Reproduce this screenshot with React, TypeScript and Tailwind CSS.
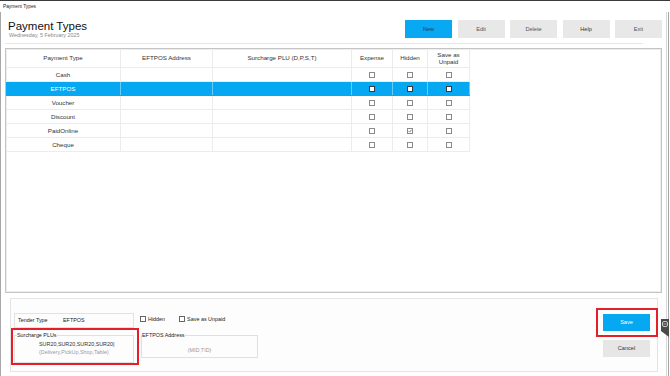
import React from "react";

const rows = [
  { name: "Cash", expense: false, hidden: false, unpaid: false },
  { name: "EFTPOS", expense: false, hidden: false, unpaid: false, selected: true },
  { name: "Voucher", expense: false, hidden: false, unpaid: false },
  { name: "Discount", expense: false, hidden: false, unpaid: false },
  { name: "PaidOnline", expense: false, hidden: true, unpaid: false },
  { name: "Cheque", expense: false, hidden: false, unpaid: false },
];

function Check({ checked, sel }: { checked?: boolean; sel?: boolean }) {
  return (
    <div
      className={
        "w-[6px] h-[6px] border flex items-center justify-center " +
        (sel ? "border-[#3a3a3a] bg-white" : "border-[#8a8a8a] bg-white")
      }
    >
      {checked && (
        <svg width="4" height="4" viewBox="0 0 4 4">
          <path d="M0.5 2 L1.6 3.1 L3.5 0.8" stroke="#555" strokeWidth="0.7" fill="none" />
        </svg>
      )}
    </div>
  );
}

const cols = ["w-[115px]", "w-[92px]", "w-[139px]", "w-[41px]", "w-[35px]", "w-[42px]"];

export default function App() {
  return (
    <div
      className="relative w-[670px] h-[376px] overflow-hidden bg-white border-t border-[#3a3a3a] text-[#333]"
      style={{ fontFamily: '"Liberation Sans", Arial, sans-serif' }}
    >
      {/* window side borders */}
      <div className="absolute left-0 top-[11px] bottom-0 w-[1px] bg-[#a8a8a8]" />
      <div className="absolute right-[1px] top-[11px] bottom-0 w-[1px] bg-[#a8a8a8]" />
      <div className="absolute right-[3px] top-[11px] bottom-0 w-[1px] bg-[#d8d8d8]" />

      {/* title bar */}
      <div className="h-[11px] flex items-center pl-[3px] text-[4.8px] leading-[6px] text-[#222]">
        Payment Types
      </div>

      {/* header */}
      <div className="ml-[5px] w-[657px] flex justify-between pt-[8px]">
        <div className="pl-[3px]">
          <div className="text-[11.5px] leading-[12px] text-[#111]">Payment Types</div>
          <div className="mt-[0px] pl-[1px] text-[5.4px] leading-[6px] text-[#8a8a8a]">
            Wednesday, 5 February 2025
          </div>
        </div>
        <div className="flex gap-[5.5px] pr-[0px]">
          <button className="w-[47px] h-[18px] bg-[#08a9f2] text-[5.6px] text-[#23405a]">New</button>
          <button className="w-[47px] h-[18px] bg-[#e8e8e8] text-[5.6px] text-[#555]">Edit</button>
          <button className="w-[47px] h-[18px] bg-[#e8e8e8] text-[5.6px] text-[#555]">Delete</button>
          <button className="w-[47px] h-[18px] bg-[#e8e8e8] text-[5.6px] text-[#333]">Help</button>
          <button className="w-[47px] h-[18px] bg-[#e8e8e8] text-[5.6px] text-[#555]">Exit</button>
        </div>
      </div>
      <div className="ml-[5px] w-[638px] h-[6px] border-b border-[#e6e6e6]" />

      {/* table panel */}
      <div className="ml-[5px] mt-[4px] w-[657px] h-[245px] border border-[#c4c4c4] shadow-[inset_0_0_0_1px_#ededed] pt-[1px] pl-[0px]">
        <div className="w-[464px]">
          <div className="flex h-[18px] text-[6.2px] text-[#333] border-b border-[#ececec]">
            {["Payment Type", "EFTPOS Address", "Surcharge PLU (D,P,S,T)", "Expense", "Hidden", "Save as Unpaid"].map(
              (h, i) => (
                <div
                  key={h}
                  className={
                    cols[i] +
                    " flex items-center justify-center text-center leading-[6.8px] border-r border-[#ececec]" +
                    (i === 5 ? " px-[6px]" : "")
                  }
                >
                  {h}
                </div>
              )
            )}
          </div>
          {rows.map((r) => (
            <div
              key={r.name}
              className={
                "flex h-[14px] text-[6.2px] border-b " +
                (r.selected ? "bg-[#06a8f1] text-white border-[#06a8f1]" : "text-[#333] border-[#ececec]")
              }
            >
              <div className={cols[0] + " flex items-center justify-center border-r " + (r.selected ? "border-white/40" : "border-[#ececec]")}>
                {r.name}
              </div>
              <div className={cols[1] + " border-r " + (r.selected ? "border-white/40" : "border-[#ececec]")} />
              <div className={cols[2] + " border-r " + (r.selected ? "border-white/40" : "border-[#ececec]")} />
              <div className={cols[3] + " flex items-center justify-center border-r " + (r.selected ? "border-white/40" : "border-[#ececec]")}>
                <Check checked={r.expense} sel={r.selected} />
              </div>
              <div className={cols[4] + " flex items-center justify-center border-r " + (r.selected ? "border-white/40" : "border-[#ececec]")}>
                <Check checked={r.hidden} sel={r.selected} />
              </div>
              <div className={cols[5] + " flex items-center justify-center border-r " + (r.selected ? "border-white/40" : "border-[#ececec]")}>
                <Check checked={r.unpaid} sel={r.selected} />
              </div>
            </div>
          ))}
        </div>
      </div>

      {/* bottom panel */}
      <div className="ml-[10px] mt-[5px] w-[648px] h-[74px] border border-[#e4e4e4] bg-[#fdfdfd] flex text-[5.4px]">
        {/* left col */}
        <div className="w-[128px] flex flex-col">
          <div className="mt-[14px] ml-[3px] w-[120px] h-[15px] border border-[#e2e2e2] flex items-center pl-[3px]">
            <div className="w-[45px] text-[#222]">Tender Type</div>
            <div className="text-[#222]">EFTPOS</div>
          </div>
          <div className="w-[128px] h-[37px] border-2 border-[#e3202a] pt-[2px]">
            <fieldset className="ml-[1px] w-[120px] h-[31px] border border-[#e0e0e0]">
              <legend className="ml-[2px] px-0 text-[5.4px] leading-[6px] text-[#222]">Surcharge PLUs</legend>
              <div className="pl-[24px] mt-[2px] leading-[8px] text-[#333]">SUR20,SUR20,SUR20,SUR20|</div>
              <div className="pl-[24px] leading-[8px] text-[#9a9a9a]">(Delivery,PickUp,Shop,Table)</div>
            </fieldset>
          </div>
        </div>

        {/* middle col */}
        <div className="ml-[1px] flex flex-col">
          <div className="mt-[17px] flex items-center h-[6px]">
            <div className="w-[6px] h-[6px] border border-[#666] bg-white" />
            <span className="ml-[2px] text-[#222]">Hidden</span>
            <div className="ml-[14px] w-[6px] h-[6px] border border-[#666] bg-white" />
            <span className="ml-[2px] text-[#222]">Save as Unpaid</span>
          </div>
          <fieldset className="mt-[10px] ml-[1px] w-[117px] h-[26px] border border-[#e0e0e0]">
            <legend className="px-0 text-[5.4px] leading-[6px] text-[#222]">EFTPOS Address</legend>
            <div className="mt-[9px] text-center leading-[6px] text-[#999]">(MID,TID)</div>
          </fieldset>
        </div>

        <div className="flex-1" />

        {/* right col */}
        <div className="flex flex-col mr-[-1px]">
          <div className="mt-[9px] w-[62px] h-[29px] border-2 border-[#e3202a] pl-[5px] pt-[4px]">
            <button className="w-[47px] h-[17px] bg-[#06a8f1] text-white text-[5.6px]">Save</button>
          </div>
          <button className="mt-[3px] ml-[7px] w-[47px] h-[17px] bg-[#e6e6e6] text-[#333] text-[5.6px]">
            Cancel
          </button>
        </div>
      </div>

      {/* floating side tab */}
      <svg className="absolute left-[660px] top-[317px]" width="10" height="20" viewBox="0 0 10 20">
        <path d="M1 1 H9 V19 L1 13 Z" fill="#4a4a4a" />
        <rect x="2.5" y="3.5" width="5" height="5" rx="1.5" fill="none" stroke="#d8d8d8" strokeWidth="0.9" />
        <line x1="3.5" y1="6" x2="6.5" y2="6" stroke="#d8d8d8" strokeWidth="0.7" />
      </svg>
    </div>
  );
}
